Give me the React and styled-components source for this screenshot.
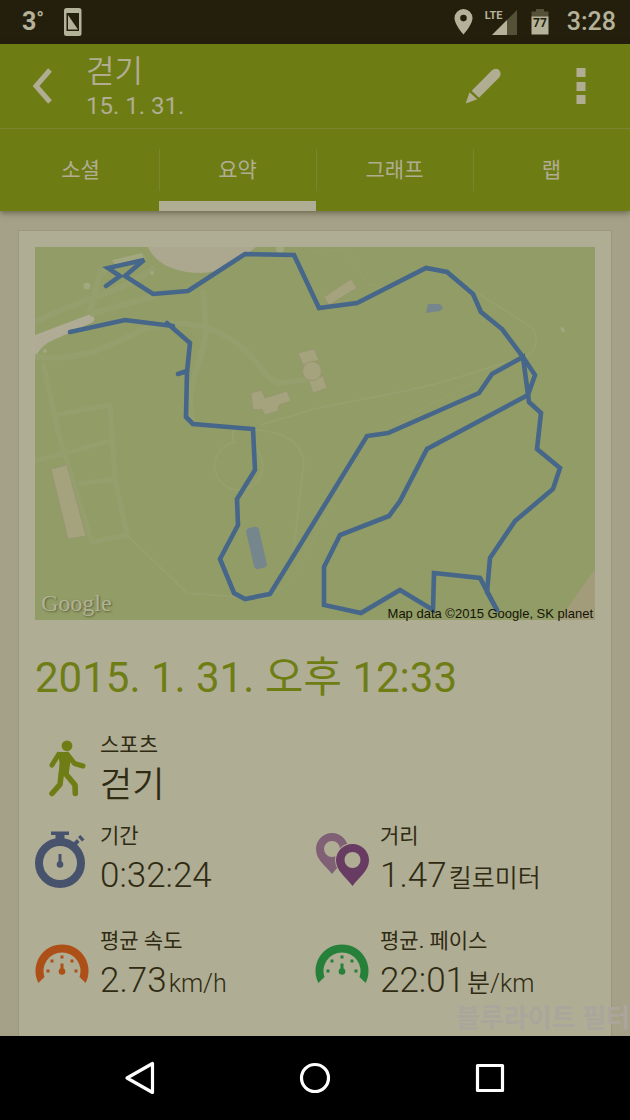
import React, { useState } from 'react'
import styled, { createGlobalStyle } from 'styled-components'

const TABS = ['소셜', '요약', '그래프', '랩'];

const STATS = [
    { title: '기간', value: '0:32:24', unit: '', icon: <StopwatchIcon /> },
    { title: '거리', value: '1.47', unit: '킬로미터', icon: <PinsIcon /> },
    { title: '평균 속도', value: '2.73', unit: 'km/h', icon: <GaugeIcon color="#ad5018" /> },
    { title: '평균. 페이스', value: '22:01', unit: '분/km', icon: <GaugeIcon color="#27803a" /> },
];

function App() {
    const [selected, setSelected] = useState('요약');

    return (
        <Screen>
            <GlobalStyle />
            <StatusBar>
                <StatusGroup>
                    <Temperature>3<sup>°</sup></Temperature>
                    <PhoneIcon />
                </StatusGroup>
                <StatusGroup>
                    <LocationIcon />
                    <Signal>
                        <span>LTE</span>
                        <SignalIcon />
                    </Signal>
                    <BatteryIcon />
                    <Clock>3:28</Clock>
                </StatusGroup>
            </StatusBar>

            <Header>
                <TitleBar>
                    <IconButton aria-label="뒤로">
                        <svg width="20" height="36" viewBox="0 0 20 36">
                            <path d="M18 2 4 18l14 16" fill="none" stroke="#b0ad93" strokeWidth="5" />
                        </svg>
                    </IconButton>
                    <Titles>
                        <h1>걷기</h1>
                        <p>15. 1. 31.</p>
                    </Titles>
                    <IconButton aria-label="편집">
                        <svg width="36" height="36" viewBox="0 0 36 36" fill="#b0ad93">
                            <path d="M6.700 22.700 26.500 2.700C29 .2 32 0 34 2s2.300 5.500-.3 8L14 29.700Z" />
                            <path d="M4.500 24.300l7.800 7L.7 35.500Z" />
                        </svg>
                    </IconButton>
                    <IconButton aria-label="메뉴" $wide>
                        <svg width="10" height="36" viewBox="0 0 10 36" fill="#b0ad93">
                            <rect x=".5" y="0" width="9" height="9" />
                            <rect x=".5" y="14" width="9" height="9" />
                            <rect x=".5" y="27" width="9" height="9" />
                        </svg>
                    </IconButton>
                </TitleBar>
                <Tabs>
                    {TABS.map(tab => (
                        <Tab key={tab} $active={tab === selected} onClick={() => setSelected(tab)}>
                            {tab}
                        </Tab>
                    ))}
                </Tabs>
            </Header>

            <Content>
                <Card>
                    <MapFigure>
                        <RouteMap />
                        <MapLogo>Google</MapLogo>
                        <MapCredit>Map data ©2015 Google, SK planet</MapCredit>
                    </MapFigure>
                    <StartTime>2015. 1. 31. 오후 12:33</StartTime>
                    <Sport>
                        <StatIcon $walker><WalkIcon /></StatIcon>
                        <StatText>
                            <dt>스포츠</dt>
                            <SportName>걷기</SportName>
                        </StatText>
                    </Sport>
                    <Stats>
                        {STATS.map(el => (
                            <Stat key={el.title}>
                                <StatIcon>{el.icon}</StatIcon>
                                <StatText>
                                    <dt>{el.title}</dt>
                                    <StatValue>{el.value}<span>{el.unit}</span></StatValue>
                                </StatText>
                            </Stat>
                        ))}
                    </Stats>
                </Card>
                <FilterToast>블루라이트 필터</FilterToast>
            </Content>

            <NavBar>
                <NavButton aria-label="Back">
                    <svg width="32" height="34" viewBox="0 0 32 34">
                        <path d="M28.500 2.500v29L3 17Z" />
                    </svg>
                </NavButton>
                <NavButton aria-label="Home">
                    <svg width="32" height="32" viewBox="0 0 32 32">
                        <circle cx="16" cy="16" r="13.500" />
                    </svg>
                </NavButton>
                <NavButton aria-label="Recent">
                    <svg width="30" height="30" viewBox="0 0 30 30">
                        <rect x="2.500" y="2.500" width="25" height="25" />
                    </svg>
                </NavButton>
            </NavBar>
        </Screen>
    )
}

export default App

function PhoneIcon() {
    return (
        <svg width="18" height="28" viewBox="0 0 18 28">
            <rect width="17.500" height="28" rx="2.500" fill="#b5b29a" />
            <rect x="2.500" y="5" width="12.500" height="18" fill="#231f0c" />
            <path d="M4 7 14 21.500H4Z" fill="#b5b29a" />
        </svg>
    )
}

function LocationIcon() {
    return (
        <svg width="19" height="26" viewBox="0 0 19 26">
            <path d="M9.500 0a9 9 0 0 1 9 9c0 6.500-9 16.500-9 16.500S.5 15.500.5 9a9 9 0 0 1 9-9Zm0 5.800a3.300 3.300 0 1 0 0 6.600 3.300 3.300 0 0 0 0-6.600Z" fill="#b5b29a" />
        </svg>
    )
}

function SignalIcon() {
    return (
        <svg width="25" height="25" viewBox="0 0 25 25">
            <path d="M25 0v25H0Z" fill="#555139" />
            <path d="M15 10v15H0Z" fill="#b5b29a" />
        </svg>
    )
}

function BatteryIcon() {
    return (
        <svg width="18" height="26" viewBox="0 0 18 26">
            <path d="M5 0h8v2.500h4.500V8H.5V2.500H5Z" fill="#555139" />
            <rect x=".5" y="7.500" width="17" height="18" fill="#b5b29a" />
            <text x="9" y="18" textAnchor="middle" fontFamily="Roboto, sans-serif" fontSize="12" fontWeight="700" fill="#231f0c">77</text>
        </svg>
    )
}

function WalkIcon() {
    return (
        <svg width="38" height="57" viewBox="0 0 38 57" fill="none" stroke="#6e7e15" strokeLinecap="round" strokeLinejoin="round">
            <circle cx="19" cy="5.800" r="5.400" fill="#6e7e15" stroke="none" />
            <path d="M10 12H20l2.500 9.500L20.500 35h-10l1-12Z" fill="#6e7e15" stroke="none" />
            <path d="M10.500 14.500 4 25M19.500 14.500l7 9 8.500 2.500" strokeWidth="5" />
            <path d="M13.300 33.500 12 44.500l-8 9M17 33l10 12 .3 8.500" strokeWidth="5.600" />
        </svg>
    )
}

function StopwatchIcon() {
    return (
        <svg width="50" height="57" viewBox="0 0 50 57" fill="#47536d">
            <circle cx="25" cy="32" r="21" fill="none" stroke="#47536d" strokeWidth="8" />
            <path d="M16 .5h18V4h-4.500v5h-9V4H16Z" />
            <path d="m38 12 4-4 2.500 3-3.500 4ZM43 6l2.500-2 4 4.500-2.500 2Z" />
            <rect x="23.500" y="23" width="3" height="9" />
            <circle cx="25" cy="33.500" r="3.300" />
        </svg>
    )
}

function PinsIcon() {
    return (
        <svg width="54" height="55" viewBox="0 0 54 55">
            <path d="M17 0a16 16 0 0 1 16 16c0 11-9 16-16 25C10 32 1 27 1 16A16 16 0 0 1 17 0Zm0 8a8 8 0 1 0 0 16 8 8 0 0 0 0-16Z" fill="#7f6074" />
            <path d="M37.500 11A16.300 16.300 0 0 1 54 27.300C54 38 44 44 37.500 53 31 44 21 38 21 27.300A16.300 16.300 0 0 1 37.500 11Z" fill="#683b62" stroke="#b0ad95" strokeWidth="2" paintOrder="stroke" />
            <circle cx="37.500" cy="27" r="8" fill="#b0ad95" />
        </svg>
    )
}

function GaugeIcon({ color }) {
    return (
        <svg width="54" height="49" viewBox="0 0 54 49" fill={color}>
            <path d="M3.400 39A26.500 26.500 0 1 1 50.600 39L44.500 33A18.500 18.500 0 1 0 9.500 33Z" />
            <path d="M25.500 11.500h3v3h-3ZM15.500 15.500h3v3h-3ZM35.500 15.500h3v3h-3ZM11.500 25.500h3v3h-3ZM39.500 25.500h3v3h-3ZM25.500 19.500h3v7h-3Z" />
            <circle cx="27" cy="27.500" r="3.300" />
        </svg>
    )
}

function RouteMap() {
    return (
        <svg viewBox="35 247 560 373" role="img" aria-label="경로">
            <rect x="35" y="247" width="560" height="373" fill="#919c66" />
            {/* bare ground */}
            <path d="M148 247h108c-14 12-35 26-55 26-27 0-46-10-53-26Z" fill="#aca78f" />
            <path d="M35 335 88 315c6-2 9 6 3 8l-33 15c-12 5-17 8-23 20Z" fill="#b0ab95" />
            <path d="M595 569v51h-36Z" fill="#a39c7a" />
            {/* paths */}
            <g fill="none" stroke="#959f6e" strokeWidth="6" strokeLinejoin="round">
                <path d="M35 322c50-25 85-28 120-55M90 314l65-18M35 357c45 4 70-8 105-26 40-17 80-2 100 15 22 18 26 35 40 37l30-4" />
                <path d="M203 290l3 40c-2 30-14 40-16 68l2 26M90 312l10-40 45-15" />
            </g>
            <g fill="none" stroke="#959f6e" strokeWidth="5" strokeLinejoin="round">
                <path d="M43 362l15 70 34 110 35-7-12-55-5-75-55 10M35 461l75-20M78 484l37-5" />
            </g>
            <g fill="none" stroke="#96a06f" strokeWidth="2">
                <path d="M127 535l60 58 40 3 40 2M253 430c30 0 55 15 50 40l-10 85M237 442a24 24 0 1 0 15 4M233 430v14M260 425l55-16c35-9 95-15 160-37l48-15c15-3 18-25 5-32l-60-38" />
                <path d="M310 253l35-4 22 34c20 10 30 2 60-15M367 436l-70 135c-9 16-20 22-30 25M380 430l140-70" opacity=".5" />
            </g>
            {/* buildings */}
            <g fill="#a4a37d" stroke="#999771" strokeWidth="1">
                <path d="M324 297l27-18 6 9-28 17ZM251 393l10-3 4 8 22-7 4 10-12 4-1 6-13 4-3-6-9 1ZM298 353l16-4 5 11-16 5ZM309 381l14-5 4 12-14 5ZM51 469l16-4 19 71-18 3Z" />
                <circle cx="312" cy="371" r="9.500" />
            </g>
            <g fill="#a2a780">
                <circle cx="87" cy="286" r="3.500" />
                <circle cx="152" cy="273" r="2" />
                <circle cx="45" cy="351" r="2" />
                <circle cx="280" cy="249" r="4" />
                <path d="M560 328l3-1 2 4-2 2ZM112 260l30-7 2 6-28 7Z" />
            </g>
            {/* ponds */}
            <path d="M428 304h12l3 4-3 3-14 2Z" fill="#75868c" />
            <rect x="250" y="527" width="13" height="42" rx="4" fill="#75868d" transform="rotate(-13 256 548)" />
            {/* route */}
            <g fill="none" stroke="#46668a" strokeWidth="4.600" strokeLinecap="round" strokeLinejoin="miter">
                <path d="M106 286l14-10-12-8 36-8-19 16 28 18 35-3 57-37 49 1 25 53 38-5 69-35 21 4 26 22 8 18 21 17 21 28 12 18-7 20-101 54-27 52-11 15-49 19-16 32v38l37 8 39-23 33 20 1-37 46 5 17 32" />
                <path d="M497 610l-10-18 3-34 25-37 38-32 7-21-23-19 4-36-12-11-6-45-31 17-13 19-91 40-21 3-97 158-25 5-11-6-14-34 18-34-1-26 18-29-2-41-60-5-7-7 1-45 3-29-23-20" />
                <path d="M173 326l-48-6-55 12M178 374l9-3" />
            </g>
        </svg>
    )
}

const GlobalStyle = createGlobalStyle`
    * {
        box-sizing: border-box;
    }

    body {
        margin: 0;
        background: #000;
        font-family: Roboto, "Noto Sans CJK KR", sans-serif;
    }

    h1, h2, p, dl, dd, figure {
        margin: 0;
        font-weight: normal;
    }

    button {
        padding: 0;
        border: 0;
        background: transparent;
        color: inherit;
        font: inherit;
        cursor: pointer;
    }

    svg {
        display: block;
    }
`

const Screen = styled.div`
    min-height: 100vh;
    display: flex;
    flex-direction: column;
    background: #a5a189;
    color: #2f2b12;
`

const StatusBar = styled.div`
    height: 44px;
    padding: 0 14px 0 22px;
    display: flex;
    justify-content: space-between;
    align-items: center;
    background: #231f0c;
    color: #b5b29a;
`

const StatusGroup = styled.div`
    display: flex;
    align-items: center;
    gap: 14px;
`

const Temperature = styled.span`
    width: 28px;
    font-size: 25px;
    font-weight: 700;
    line-height: 28px;

    sup {
        font-size: 20px;
        line-height: 0;
        vertical-align: 4px;
    }
`

const Signal = styled.div`
    position: relative;
    padding-left: 5px;

    span {
        position: absolute;
        top: -1px;
        left: -2px;
        font-size: 11px;
        font-weight: 700;
        line-height: 14px;
    }
`

const Clock = styled.span`
    margin-left: 4px;
    font-size: 25px;
    font-weight: 500;
    line-height: 28px;
`

const Header = styled.header`
    position: relative;
    background: #6e7c14;
    color: #b0ad93;
    box-shadow: 0 2px 6px rgba(50, 45, 20, .5);
`

const TitleBar = styled.div`
    height: 85px;
    padding: 0 17px 0 32px;
    display: flex;
    align-items: center;
    border-bottom: 1px solid #7b8531;
`

const IconButton = styled.button`
    min-width: 20px;
    height: 48px;
    display: flex;
    justify-content: center;
    align-items: center;
    width: ${props => props.$wide ? '64px' : 'auto'};
    margin-left: ${props => props.$wide ? '48px' : '0'};
`

const Titles = styled.div`
    flex: 1;
    padding: 4px 0 0 34px;

    h1 {
        font-size: 31px;
        font-weight: 350;
        line-height: 36px;
    }

    p {
        font-size: 24px;
        line-height: 32px;
    }
`

const Tabs = styled.nav`
    display: grid;
    grid-template-columns: repeat(4, 1fr);
    padding-left: 2px;
`

const Tab = styled.button`
    position: relative;
    height: 82px;
    font-size: 21px;
    font-weight: 400;
    border-bottom: 10px solid ${props => props.$active ? '#b0ad95' : 'transparent'};
    padding-top: 6px;

    &:not(:first-child)::before {
        content: "";
        position: absolute;
        left: 0;
        top: 20px;
        width: 1px;
        height: 42px;
        background: #7b8530;
    }
`

const Content = styled.main`
    position: relative;
    flex: 1;
    display: flex;
    flex-direction: column;
    padding: 19px 18px 0;
`

const Card = styled.section`
    flex: 1;
    padding: 16px;
    padding-bottom: 0;
    background: #b0ad95;
    border: 1px solid #9b977f;
    border-bottom: 0;
`

const MapFigure = styled.figure`
    position: relative;

    svg {
        width: 100%;
    }
`

const MapLogo = styled.span`
    position: absolute;
    left: 6px;
    bottom: 3px;
    color: #b3b195;
    font-family: "Liberation Serif", serif;
    font-size: 24px;
    line-height: 28px;
    text-shadow: 1px 1px 2px #59613a;
`

const MapCredit = styled.figcaption`
    position: absolute;
    right: 2px;
    bottom: -2px;
    color: #151307;
    font-family: "Liberation Sans", sans-serif;
    font-size: 13px;
    line-height: 16px;
`

const StartTime = styled.h2`
    padding: 34px 0 30px;
    color: #6e7e15;
    font-size: 42px;
    font-weight: 400;
    line-height: 48px;
`

const Sport = styled.dl`
    display: flex;
    height: 91px;
`

const Stats = styled.dl`
    display: grid;
    grid-template-columns: 1fr 1fr;
`

const Stat = styled.div`
    display: flex;
    height: 105px;
`

const StatIcon = styled.div`
    width: 65px;
    height: 65px;
    display: flex;
    align-items: flex-end;
    padding-left: ${props => props.$walker ? '13px' : '0'};
`

const StatText = styled.div`
    dt {
        font-size: 21px;
        font-weight: 400;
        line-height: 26px;
    }
`

const SportName = styled.dd`
    font-size: 35px;
    font-weight: 350;
    line-height: 56px;
`

const StatValue = styled.dd`
    font-size: 35px;
    font-weight: 300;
    line-height: 54px;
    white-space: nowrap;

    span {
        padding-left: 2px;
        font-size: 25px;
        font-weight: 350;
    }
`

const FilterToast = styled.div`
    position: absolute;
    right: 0;
    bottom: 0;
    color: #aaa69c;
    font-size: 26px;
    font-weight: 700;
    line-height: 36px;
    white-space: nowrap;
`

const NavBar = styled.nav`
    height: 84px;
    padding: 0 52px;
    display: grid;
    grid-template-columns: repeat(3, 1fr);
    background: #000;
`

const NavButton = styled.button`
    display: flex;
    justify-content: center;
    align-items: center;

    svg {
        fill: none;
        stroke: #fff;
        stroke-width: 3.2px;
        stroke-linejoin: round;
    }
`
